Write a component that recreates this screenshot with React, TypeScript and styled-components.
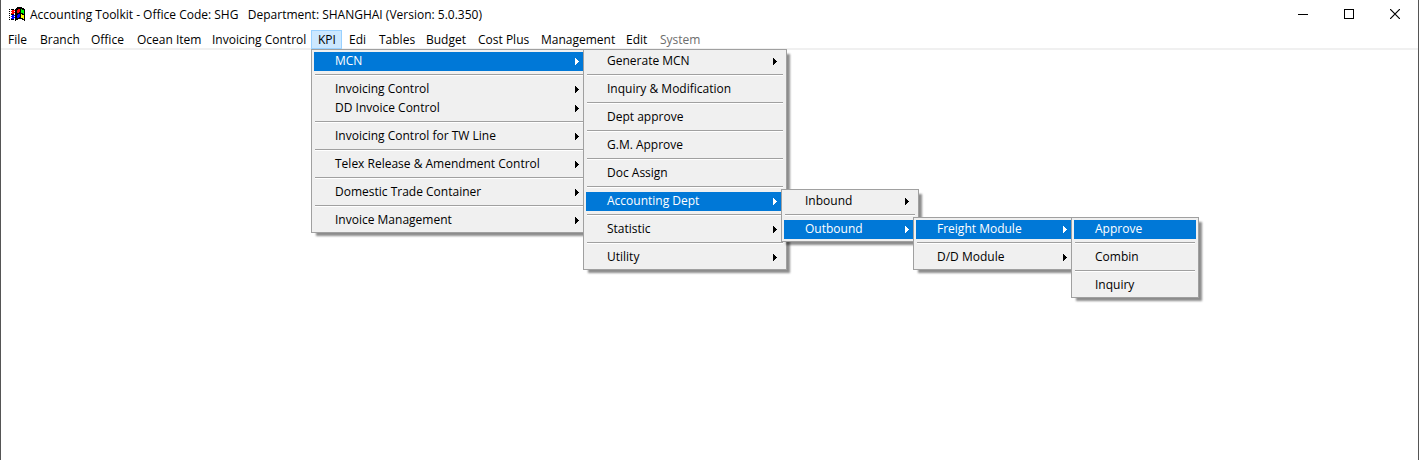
import React from 'react';
import styled, { createGlobalStyle, css } from 'styled-components';

const GlobalStyle = createGlobalStyle`
  *, *::before, *::after { box-sizing: border-box; }
  body {
    margin: 0;
    background: #fff;
    color: #000;
    font-family: 'Segoe UI', 'Open Sans', sans-serif;
    font-size: 12px;
    line-height: 19px;
  }
  button {
    font: inherit;
    color: inherit;
    margin: 0;
    padding: 0;
    border: 0;
    background: none;
  }
`;

const Window = styled.main`
  display: flex;
  flex-direction: column;
  min-height: 100vh;
  border: solid #555;
  border-width: 0 1px;
  background: #fff;
`;

const TitleBar = styled.header`
  display: flex;
  align-items: center;
  height: 30px;
  padding: 0 0 2px 7px;
`;

const AppIcon = styled.svg`
  flex: none;
  width: 17px;
  height: 14px;
  margin-right: 5px;
`;

const Title = styled.h1`
  flex: 1;
  margin: 0;
  padding-top: 2px;
  font-size: 12px;
  font-weight: 400;
  line-height: 18px;
  white-space: pre;
`;

const WindowButton = styled.button`
  display: flex;
  align-items: center;
  justify-content: center;
  width: 46px;
  height: 28px;

  &:hover { background: #e5e5e5; }
`;

const MenuBar = styled.ul`
  display: flex;
  margin: 0;
  padding: 0;
  list-style: none;
  height: 20px;
  box-shadow: inset 0 -2px #f0f0f0;
`;

const BarItem = styled.li<{ $width: number }>`
  position: relative;
  width: ${({ $width }) => $width}px;
  height: 19px;
`;

const BarButton = styled.button<{ $open?: boolean }>`
  width: 100%;
  height: 19px;
  padding-left: 7px;
  text-align: left;
  white-space: nowrap;

  &:disabled { color: #6d6d6d; }

  ${({ $open }) => $open && css`
    background: #cce8ff;
    box-shadow: inset 0 0 0 1px #99d1ff;
  `}
`;

const Menu = styled.ul<{ $width: number; $root?: boolean }>`
  position: absolute;
  z-index: 1;
  top: ${({ $root }) => ($root ? '100%' : '-3px')};
  left: ${({ $root }) => ($root ? '0' : 'calc(100% - 3px)')};
  width: ${({ $width }) => $width}px;
  margin: 0;
  padding: 2px;
  list-style: none;
  border: 1px solid #a0a0a0;
  background: #f0f0f0;
  box-shadow: 4px 4px 2px -1px rgba(0, 0, 0, 0.45);
`;

const MenuRow = styled.li`
  position: relative;
`;

const MenuButton = styled.button<{ $open?: boolean }>`
  display: flex;
  align-items: center;
  justify-content: space-between;
  width: 100%;
  height: 19px;
  padding: 0 7px 0 21px;
  text-align: left;
  white-space: nowrap;

  ${({ $open }) => $open && css`
    background: #0078d7;
    color: #fff;
  `}
`;

const MenuLabel = styled.span`
  padding-bottom: 2px;
`;

const Divider = styled.li`
  height: 2px;
  margin: 3px 1px 4px;
  border-top: 1px solid #a0a0a0;
  background: #fff;
`;

type Entry = '-' | { label: string; arrow?: boolean; open?: boolean; sub?: SubMenu };
type SubMenu = { width: number; entries: Entry[] };

const approvalMenu: SubMenu = {
  width: 128,
  entries: [{ label: 'Approve', open: true }, '-', { label: 'Combin' }, '-', { label: 'Inquiry' }],
};

const outboundMenu: SubMenu = {
  width: 164,
  entries: [
    { label: 'Freight Module', arrow: true, open: true, sub: approvalMenu },
    '-',
    { label: 'D/D Module', arrow: true },
  ],
};

const accountingMenu: SubMenu = {
  width: 138,
  entries: [
    { label: 'Inbound', arrow: true },
    '-',
    { label: 'Outbound', arrow: true, open: true, sub: outboundMenu },
  ],
};

const mcnMenu: SubMenu = {
  width: 204,
  entries: [
    { label: 'Generate MCN', arrow: true },
    '-',
    { label: 'Inquiry & Modification' },
    '-',
    { label: 'Dept approve' },
    '-',
    { label: 'G.M. Approve' },
    '-',
    { label: 'Doc Assign' },
    '-',
    { label: 'Accounting Dept', arrow: true, open: true, sub: accountingMenu },
    '-',
    { label: 'Statistic', arrow: true },
    '-',
    { label: 'Utility', arrow: true },
  ],
};

const kpiMenu: SubMenu = {
  width: 278,
  entries: [
    { label: 'MCN', arrow: true, open: true, sub: mcnMenu },
    '-',
    { label: 'Invoicing Control', arrow: true },
    { label: 'DD Invoice Control', arrow: true },
    '-',
    { label: 'Invoicing Control for TW Line', arrow: true },
    '-',
    { label: 'Telex Release & Amendment Control', arrow: true },
    '-',
    { label: 'Domestic Trade Container', arrow: true },
    '-',
    { label: 'Invoice Management', arrow: true },
  ],
};

const barItems: { label: string; width: number; menu?: SubMenu; disabled?: boolean }[] = [
  { label: 'File', width: 32 },
  { label: 'Branch', width: 51 },
  { label: 'Office', width: 46 },
  { label: 'Ocean Item', width: 75 },
  { label: 'Invoicing Control', width: 106 },
  { label: 'KPI', width: 31, menu: kpiMenu },
  { label: 'Edi', width: 30 },
  { label: 'Tables', width: 47 },
  { label: 'Budget', width: 52 },
  { label: 'Cost Plus', width: 63 },
  { label: 'Management', width: 85 },
  { label: 'Edit', width: 34 },
  { label: 'System', width: 52, disabled: true },
];

const Arrow = () => (
  <svg width="4" height="7" viewBox="0 0 4 7" shapeRendering="crispEdges" aria-hidden="true">
    <path d="M0 0h1v1h1v1h1v1h1v1h-1v1h-1v1h-1v1h-1z" fill="currentColor" />
  </svg>
);

function MenuList({ menu, root }: { menu: SubMenu; root?: boolean }) {
  return (
    <Menu role="menu" $width={menu.width} $root={root}>
      {menu.entries.map((entry, i) =>
        entry === '-' ? (
          <Divider key={i} role="separator" />
        ) : (
          <MenuRow key={i} role="none">
            <MenuButton type="button" role="menuitem" $open={entry.open}>
              <MenuLabel>{entry.label}</MenuLabel>
              {entry.arrow && <Arrow />}
            </MenuButton>
            {entry.sub && <MenuList menu={entry.sub} />}
          </MenuRow>
        ),
      )}
    </Menu>
  );
}

const FlagIcon = () => (
  <AppIcon viewBox="0 0 17 14" shapeRendering="crispEdges" aria-hidden="true">
    <path
      fill="#000"
      d="M9 0h5v1h2v1h1v12h-1v-1h-2v-1h-4v1h-2v1h-1v-12h1v-1h1z M1 2h1v1h-1z M1 4h1v1h-1z M1 6h1v1h-1z M1 8h1v1h-1z M1 10h1v1h-1z M1 12h1v1h-1z M3 2h3v1h-3z M3 7h3v1h-3z M3 12h3v1h-3z"
    />
    <path fill="#f00" d="M9 3h1v-1h2v3h-1v1h-2z M3 4h1v-1h3v1h-1v1h-3z M3 6h1v-1h3v1h-1v1h-3z" />
    <path fill="#0f0" d="M13 2h1v1h2v4h-1v-1h-2z" />
    <path fill="#00f" d="M9 8h1v-1h2v3h-1v1h-2z M3 9h1v-1h3v1h-1v1h-3z M3 11h1v-1h3v1h-1v1h-3z" />
    <path fill="#ff0" d="M13 7h1v1h2v4h-1v-1h-2z" />
  </AppIcon>
);

export default function App() {
  return (
    <>
      <GlobalStyle />
      <Window>
        <TitleBar>
          <FlagIcon />
          <Title>{'Accounting Toolkit - Office Code: SHG   Department: SHANGHAI (Version: 5.0.350)'}</Title>
          <WindowButton type="button" aria-label="Minimize">
            <svg width="10" height="10" viewBox="0 0 10 10" shapeRendering="crispEdges">
              <path d="M0 5h10v1H0z" />
            </svg>
          </WindowButton>
          <WindowButton type="button" aria-label="Maximize">
            <svg width="10" height="10" viewBox="0 0 10 10" shapeRendering="crispEdges">
              <path d="M.5.5h9v9h-9z" fill="none" stroke="#000" />
            </svg>
          </WindowButton>
          <WindowButton type="button" aria-label="Close">
            <svg width="10" height="10" viewBox="0 0 10 10">
              <path d="M0 0l10 10M10 0L0 10" fill="none" stroke="#000" strokeWidth="1.2" />
            </svg>
          </WindowButton>
        </TitleBar>
        <nav aria-label="Main">
          <MenuBar role="menubar">
            {barItems.map((item) => (
              <BarItem key={item.label} role="none" $width={item.width}>
                <BarButton type="button" role="menuitem" $open={!!item.menu} disabled={item.disabled}>
                  {item.label}
                </BarButton>
                {item.menu && <MenuList menu={item.menu} root />}
              </BarItem>
            ))}
          </MenuBar>
        </nav>
      </Window>
    </>
  );
}
